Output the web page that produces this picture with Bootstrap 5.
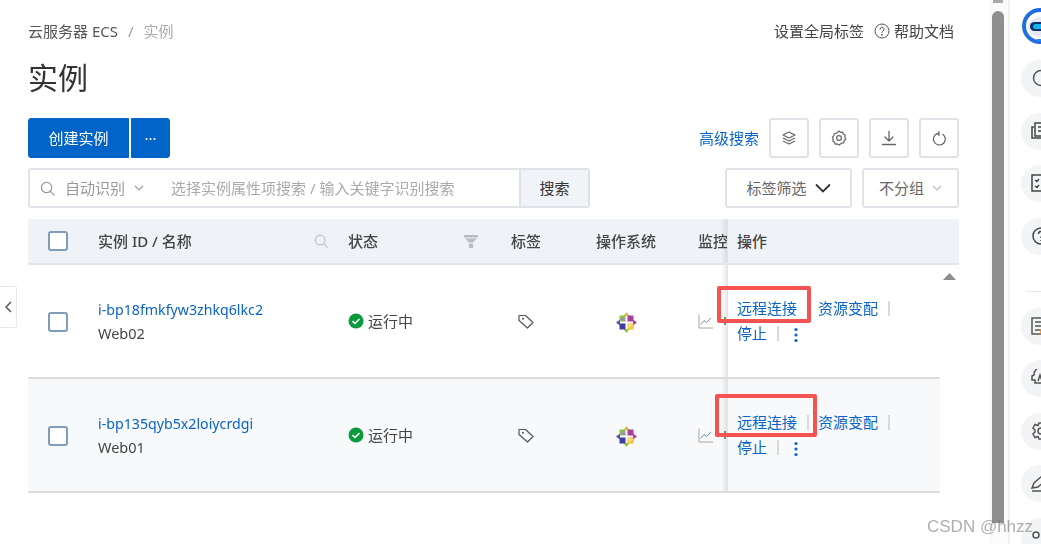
<!DOCTYPE html>
<html lang="zh-CN">
<head>
<meta charset="utf-8">
<title>实例</title>
<link href="https://cdn.jsdelivr.net/npm/bootstrap@5.3.0/dist/css/bootstrap.min.css" rel="stylesheet">
<style>
html,body{height:544px;overflow:hidden;background:#fff}
body{font-family:"Noto Sans","Noto Sans CJK SC",sans-serif;font-size:15px;color:#333}
.pg{height:544px;position:relative;filter:blur(.4px)}
.mainpane{width:989px;padding:20px 30px 0 28px;flex:none}
.crumb{margin:0;--bs-breadcrumb-margin-bottom:0;--bs-breadcrumb-divider-color:#999;--bs-breadcrumb-item-padding-x:10px;line-height:22px}
.crumb .breadcrumb-item{color:#555}
.crumb .breadcrumb-item.active{color:#aaa}
.toplink{color:#444;line-height:22px;margin-right:5px}
.helpic{margin:0 4px 0 10px}
.pagetitle{font-size:30px;line-height:40px;margin:16px 0 20px;font-weight:400;color:#333}
.btn-make{--bs-btn-bg:#0064c8;--bs-btn-border-color:#0064c8;--bs-btn-color:#fff;--bs-btn-border-radius:3px;height:40px;font-size:15px;padding:0}
.btn-make-a{width:101px;border-radius:3px 0 0 3px}
.btn-make-b{width:39px;margin-left:2px;border-radius:0 3px 3px 0;line-height:30px}
.advlink{color:#0a64c8;text-decoration:none;margin-right:10px}
.ibtn{width:40px;height:40px;border:2px solid #dfe3e8;border-radius:3px;background:#fff;padding:0;color:#666}
.ibtns{gap:10px}
.srow{margin-top:10px;height:40px}
.sgroup{width:562px;height:40px;flex-wrap:nowrap}
.sbox{width:491px;flex:none;border:2px solid #dfe3e8;border-right:0;border-radius:3px 0 0 3px;height:40px;padding-left:10px;color:#999}
.autotxt{margin:0 9px 0 10px}
.sinput{border:0;padding:0;margin-left:27px;width:300px;font-size:15px;box-shadow:none;background:transparent}
.sinput::placeholder{color:#aaa;opacity:1}
.sgroup .sbtn{width:71px;flex:none;height:40px;background:#f0f3f7;border:2px solid #dfe3e8;border-radius:0 3px 3px 0;color:#333;font-size:15px;padding:0;margin-left:0!important}
.fbtn{height:40px;border:2px solid #dfe3e8;border-radius:3px;background:#fff;color:#666;font-size:15px;padding:0}
.fbtn-a{width:127px}
.fbtn-b{width:97px}
.fgap{gap:10px}
.inst{margin:11px 0 0;width:931px;table-layout:fixed;--bs-table-bg:transparent;--bs-table-border-color:transparent;border-collapse:collapse}
.inst>*>tr>*{padding:0;vertical-align:middle;overflow:hidden;white-space:nowrap;color:#444;font-size:15px;border:0}
.inst thead tr{height:45px}
.inst thead th{background:#eff3f8;font-weight:500;border-bottom:2px solid #e2e5e9;color:#444}
.inst tbody tr{height:114px}
.inst tbody td{border-bottom:2px solid #dcdcdc;box-sizing:border-box}
.inst tbody tr.alt td{background:#f7f9fb;border-bottom-color:#dcdcdc}
.inst tbody td.gut,.inst tbody tr.alt td.gut{background:#fff;border-bottom:0;vertical-align:top;padding-top:8px;padding-left:3px;overflow:visible}
.inst>*>tr>.chk{padding-left:20px}
.inst>tbody>tr>.chk{padding-top:2px}
.chk .form-check-input{width:20px;height:20px;margin:0;display:block;border:2px solid #7f9cbb;border-radius:3px}
.inst>*>tr>.tagcol{padding-left:7px}
.inst>*>tr>.oscol{padding-left:20px;padding-top:3px}
.inst>*>tr>.opcol{position:relative;padding-left:10px;overflow:visible}
.opcol::before{content:"";position:absolute;left:-6px;top:0;bottom:0;width:6px;background:linear-gradient(to right,rgba(0,0,0,0),rgba(0,0,0,.09))}
.opcol::after{content:"";position:absolute;left:0;top:0;bottom:0;width:1px;background:#e4e4e4}
.inst a{color:#0a64c8;text-decoration:none}
.idlink{line-height:24px;margin-top:1px;display:block;font-size:14.2px}
.subname{line-height:23px;display:block;font-size:14.5px}
.sep{display:inline-block;width:2px;height:15px;background:#d9d9d9;vertical-align:-2px;margin:0 9px 0 10px}
.sep-none{background:transparent}
.opline{line-height:25px}
.kebab{margin-left:6px}
.okdot{color:#444}
.redbox{position:absolute;border:4px solid #f55252;border-radius:2px;pointer-events:none;z-index:2}
.rb1{left:-10px;top:21px;width:94px;height:37px}
.rb2{left:-12px;top:15px;width:102px;height:43px}
.chartic{display:block}
.mon{display:flex;align-items:center;height:16px}
.monsliver{display:block;width:2px;height:8px;background:#5bae6c;margin-left:11px;flex:none}
.thumbcol{width:19px;flex:none;background:#fbfbfb;padding-left:3px}
.thumb{width:12px;height:512px;margin-top:11px;background:#8f8f8f;border-radius:6px 6px 0 0}
.sidecol{width:33px;flex:none;border-left:2px solid #f1f1f1;padding:8px 0 0 11px;overflow:hidden;background:#fff}
.logo{width:36px;height:36px;display:block;flex:none}
.roundb{width:37px;height:37px;border-radius:50%;background:#f3f4f6;margin-top:15.500px;padding:9px 0 0 10px;flex:none}
.roundb svg{display:block}
.firstb{margin-top:16px}
.nogap{margin-top:0}
.sideline{height:1px;background:#e8e8e8;margin:36px 0 16px 5px;width:40px;flex:none}
.tabbtn{position:absolute;left:0;top:286px;width:17px;height:42px;border:1px solid #e8e8e8;border-left:0;border-radius:0 2px 2px 0;background:#fff;display:flex;align-items:center;justify-content:center}
.wmark{position:absolute;left:927px;top:515px;font-family:"Liberation Sans",sans-serif;font-size:17px;color:rgba(120,120,120,.6);white-space:nowrap;line-height:24px}
.topcaret{position:absolute;left:993px;top:0;width:10px;height:3px;background:#aaa}
</style>
</head>
<body>
<svg width="0" height="0" class="position-absolute">
  <defs>
    <symbol id="centos" viewBox="0 0 21 21">
      <path d="M10.500 0l3 4h-6z" fill="#d8b84a"/>
      <path d="M21 10.500l-4 3v-6z" fill="#a83f9c"/>
      <path d="M10.500 21l-3-4h6z" fill="#8cc63f"/>
      <path d="M0 10.500l4-3v6z" fill="#5a4fa8"/>
      <rect x="3.500" y="3.500" width="6" height="6" fill="#8cc63f"/>
      <rect x="11.500" y="3.500" width="6" height="6" fill="#a83f9c"/>
      <rect x="11.500" y="11.500" width="6" height="6" fill="#f4c02f"/>
      <rect x="3.500" y="11.500" width="6" height="6" fill="#3d3f9e"/>
      <path d="M8 4l1.500 5.500L4 8z" fill="#a98bc0"/>
      <path d="M17 13l-5.500-1.500L13 17z" fill="#f8d98a"/>
    </symbol>
    <symbol id="tagic" viewBox="0 0 16 16">
      <path d="M1 2.500h6.500L15 9.500 9.500 15 1 7.500z" fill="none" stroke="#555" stroke-width="1.200" stroke-linejoin="round"/><circle cx="5" cy="5.800" r="1" fill="#555"/>
    </symbol>
    <symbol id="okic" viewBox="0 0 16 16">
      <circle cx="8" cy="8" r="7.500" fill="#0a9a3c"/><path d="M4.500 8.200l2.500 2.300 4.500-4.500" fill="none" stroke="#fff" stroke-width="1.600"/>
    </symbol>
    <symbol id="chartic" viewBox="0 0 15 15">
      <path d="M1 .5v13.500h14" fill="none" stroke="#a8a49a" stroke-width="1"/><path d="M2.500 10.500l3.500-4 2.500 2 4.500-4.500" fill="none" stroke="#6d8fb0" stroke-width="1"/>
    </symbol>
    <symbol id="kebabic" viewBox="0 0 4 16">
      <circle cx="2" cy="2.500" r="1.600" fill="#0a64c8"/><circle cx="2" cy="8" r="1.600" fill="#0a64c8"/><circle cx="2" cy="13.500" r="1.600" fill="#0a64c8"/>
    </symbol>
  </defs>
</svg>
<div class="pg d-flex">
  <div class="mainpane">
    <div class="d-flex justify-content-between align-items-center">
      <nav aria-label="breadcrumb">
        <ol class="breadcrumb crumb">
          <li class="breadcrumb-item">云服务器 ECS</li>
          <li class="breadcrumb-item active">实例</li>
        </ol>
      </nav>
      <div class="d-flex align-items-center toplink">
        <span>设置全局标签</span>
        <svg class="helpic" width="16" height="16" viewBox="0 0 16 16" fill="none" stroke="#555" stroke-width="1"><circle cx="8" cy="8" r="7"/><path d="M6 6.300a2 2 0 1 1 3 1.700c-.7.400-1 .8-1 1.600" stroke-linecap="round"/><circle cx="8" cy="11.800" r=".5" fill="#555"/></svg>
        <span>帮助文档</span>
      </div>
    </div>
    <h1 class="pagetitle">实例</h1>
    <div class="d-flex justify-content-between align-items-center">
      <div class="d-flex">
        <button class="btn btn-primary btn-make btn-make-a" type="button">创建实例</button>
        <button class="btn btn-primary btn-make btn-make-b" type="button">···</button>
      </div>
      <div class="d-flex align-items-center">
        <a class="advlink" href="#">高级搜索</a>
        <div class="d-flex ibtns">
          <button class="ibtn d-flex align-items-center justify-content-center" type="button" aria-label="层"><svg width="16" height="16" viewBox="0 0 16 16" fill="none" stroke="#666" stroke-width="1.200" stroke-linejoin="round"><path d="M8 2l6 3-6 3-6-3z"/><path d="M2 8l6 3 6-3M2 11l6 3 6-3"/></svg></button>
          <button class="ibtn d-flex align-items-center justify-content-center" type="button" aria-label="设置"><svg width="16" height="16" viewBox="0 0 16 16" fill="none" stroke="#666" stroke-width="1.200" stroke-linejoin="round"><path d="M8 1l1.600 1.400 2.100-.2.700 2 1.900 1-.5 2.100.9 2-1.600 1.400-.3 2.100-2.100.3L8.200 15 6.300 13.900l-2.100.3-.7-2-1.800-1.100.5-2.100-.9-1.900L3 5.600l.2-2.100 2.200-.3z"/><circle cx="8" cy="8" r="2.400"/></svg></button>
          <button class="ibtn d-flex align-items-center justify-content-center" type="button" aria-label="下载"><svg width="16" height="16" viewBox="0 0 16 16" fill="none" stroke="#666" stroke-width="1.300" stroke-linecap="round" stroke-linejoin="round"><path d="M8 1.500v9M4 7l4 4 4-4M1.500 14.500h13"/></svg></button>
          <button class="ibtn d-flex align-items-center justify-content-center" type="button" aria-label="刷新"><svg width="15" height="15" viewBox="0 0 16 16" fill="none" stroke="#666" stroke-width="1.300" stroke-linecap="round" stroke-linejoin="round"><path d="M11.500 3.500A6.300 6.300 0 1 1 6 2.600"/><path d="M7.500 .5v4l-2-2"/></svg></button>
        </div>
      </div>
    </div>
    <div class="srow d-flex justify-content-between">
      <div class="input-group sgroup">
        <div class="sbox d-flex align-items-center">
          <svg width="15" height="15" viewBox="0 0 16 16" fill="none" stroke="#999" stroke-width="1.300" stroke-linecap="round"><circle cx="7" cy="7" r="5.500"/><path d="M11 11l4 4"/></svg>
          <span class="autotxt">自动识别</span>
          <svg width="10" height="6" viewBox="0 0 10 6" fill="none" stroke="#999" stroke-width="1.200"><path d="M1 1l4 4 4-4"/></svg>
          <input class="form-control sinput" type="text" placeholder="选择实例属性项搜索 / 输入关键字识别搜索" aria-label="搜索">
        </div>
        <button class="btn sbtn" type="button">搜索</button>
      </div>
      <div class="d-flex fgap">
        <button class="fbtn fbtn-a d-flex align-items-center justify-content-center" type="button">标签筛选<svg class="ms-2" width="16" height="10" viewBox="0 0 16 10" fill="none" stroke="#333" stroke-width="1.800"><path d="M1 1.500l7 7 7-7"/></svg></button>
        <button class="fbtn fbtn-b d-flex align-items-center justify-content-center" type="button">不分组<svg class="ms-2" width="10" height="6" viewBox="0 0 10 6" fill="none" stroke="#bbb" stroke-width="1.200"><path d="M1 1l4 4 4-4"/></svg></button>
      </div>
    </div>
    <table class="table inst">
      <colgroup>
        <col style="width:70px"><col style="width:250px"><col style="width:163px"><col style="width:85px"><col style="width:102px"><col style="width:29px"><col style="width:213px"><col style="width:19px">
      </colgroup>
      <thead>
        <tr>
          <th class="chk"><input class="form-check-input" type="checkbox" aria-label="全选"></th>
          <th><div class="d-flex justify-content-between align-items-center">实例 ID / 名称<svg style="margin-right:20px" width="14" height="14" viewBox="0 0 16 16" fill="none" stroke="#c4c7cb" stroke-width="1.600" stroke-linecap="round"><circle cx="7" cy="7" r="5.500"/><path d="M11 11l4 4"/></svg></div></th>
          <th><div class="d-flex justify-content-between align-items-center">状态<svg style="margin-right:33px" width="14" height="13" viewBox="0 0 14 13" fill="#b9bcc1"><path d="M0 0h14v2.500H0zM1 3.500h12L9 7.500H5zM5 8.500h4V13H5z"/></svg></div></th>
          <th>标签</th>
          <th>操作系统</th>
          <th>监控</th>
          <th class="opcol">操作</th>
          <th></th>
        </tr>
      </thead>
      <tbody>
        <tr>
          <td class="chk"><input class="form-check-input" type="checkbox" aria-label="选择 Web02"></td>
          <td><a class="idlink" href="#">i-bp18fmkfyw3zhkq6lkc2</a><span class="subname">Web02</span></td>
          <td><span class="d-flex align-items-center okdot"><svg class="me-1" width="16" height="16"><use href="#okic"/></svg>运行中</span></td>
          <td class="tagcol"><svg class="d-block" width="16" height="16"><use href="#tagic"/></svg></td>
          <td class="oscol"><svg class="d-block" width="21" height="21"><use href="#centos"/></svg></td>
          <td><div class="mon"><svg class="chartic" width="15" height="15"><use href="#chartic"/></svg><span class="monsliver"></span></div></td>
          <td class="opcol">
            <div class="redbox rb1"></div>
            <div class="opline"><a href="#">远程连接</a><span class="sep sep-none"></span><a href="#">资源变配</a><span class="sep"></span></div>
            <div class="opline"><a href="#">停止</a><span class="sep"></span><a href="#" class="kebab" aria-label="更多"><svg width="4" height="16"><use href="#kebabic"/></svg></a></div>
          </td>
          <td class="gut"><svg width="13" height="7" viewBox="0 0 13 7" class="d-block"><path d="M6.500 0L13 7H0z" fill="#8d8d8d"/></svg></td>
        </tr>
        <tr class="alt">
          <td class="chk"><input class="form-check-input" type="checkbox" aria-label="选择 Web01"></td>
          <td><a class="idlink" href="#">i-bp135qyb5x2loiycrdgi</a><span class="subname">Web01</span></td>
          <td><span class="d-flex align-items-center okdot"><svg class="me-1" width="16" height="16"><use href="#okic"/></svg>运行中</span></td>
          <td class="tagcol"><svg class="d-block" width="16" height="16"><use href="#tagic"/></svg></td>
          <td class="oscol"><svg class="d-block" width="21" height="21"><use href="#centos"/></svg></td>
          <td><div class="mon"><svg class="chartic" width="15" height="15"><use href="#chartic"/></svg><span class="monsliver"></span></div></td>
          <td class="opcol">
            <div class="redbox rb2"></div>
            <div class="opline"><a href="#">远程连接</a><span class="sep"></span><a href="#">资源变配</a><span class="sep"></span></div>
            <div class="opline"><a href="#">停止</a><span class="sep"></span><a href="#" class="kebab" aria-label="更多"><svg width="4" height="16"><use href="#kebabic"/></svg></a></div>
          </td>
          <td class="gut"></td>
        </tr>
      </tbody>
    </table>
  </div>
  <div class="thumbcol"><div class="thumb"></div></div>
  <div class="sidecol d-flex flex-column">
    <svg class="logo" viewBox="0 0 36 36"><circle cx="19" cy="18" r="16" fill="none" stroke="#1f6fe0" stroke-width="4"/><ellipse cx="20" cy="19" rx="13" ry="10" fill="#e3e8f4"/><rect x="9" y="14" width="24" height="9" rx="4.500" fill="#0d2f6d"/><rect x="12" y="16" width="16" height="5" rx="2.500" fill="#18b4f0"/><path d="M16 32h14" stroke="#1f8df0" stroke-width="2"/></svg>
    <div class="roundb firstb"><svg width="24" height="18" viewBox="0 0 24 18" fill="none" stroke="#555" stroke-width="1.500"><circle cx="10" cy="9" r="7.500"/></svg></div>
    <div class="roundb"><svg width="24" height="18" viewBox="0 0 24 18" fill="none" stroke="#444" stroke-width="1.500"><path d="M3 5H1v11h16"/><rect x="4" y="1" width="14" height="13"/><path d="M7 5h8M7 9h8"/></svg></div>
    <div class="roundb"><svg width="24" height="18" viewBox="0 0 24 18" fill="none" stroke="#444" stroke-width="1.500"><rect x="1" y="1" width="18" height="16"/><path d="M4 6l2 1.500L8 5M4 12l2 1.500L8 11M10 7h6M10 12h6"/></svg></div>
    <div class="roundb"><svg width="24" height="18" viewBox="0 0 24 18" fill="none" stroke="#444" stroke-width="1.500"><circle cx="10" cy="9" r="8"/><path d="M7.500 7a2.500 2.500 0 1 1 3.500 2.200c-.8.400-1 .8-1 1.800M10 13v1"/></svg></div>
    <div class="sideline"></div>
    <div class="roundb nogap"><svg width="24" height="18" viewBox="0 0 24 18" fill="none" stroke="#555" stroke-width="1.500"><rect x="1" y="1" width="18" height="16"/><path d="M4 5h12M4 9h8M4 13h6"/><path d="M10 12v5" stroke="#e98a2c"/></svg></div>
    <div class="roundb"><svg width="24" height="18" viewBox="0 0 24 18" fill="none" stroke="#555" stroke-width="1.500"><path d="M3 6a7 7 0 0 1 14-1v9H4v-3H1V7z"/><path d="M7 12l2-6 2 6"/></svg></div>
    <div class="roundb"><svg width="24" height="18" viewBox="0 0 24 18" fill="none" stroke="#555" stroke-width="1.500"><path d="M8 1h4l1 2.500 3-1 2 3.500-2 2v2l2 2-2 3.500-3-1-1 2.500H8l-1-2.500-3 1-2-3.500 2-2V8L2 6l2-3.500 3 1z"/><circle cx="10" cy="9" r="3"/></svg></div>
    <div class="roundb"><svg width="24" height="18" viewBox="0 0 24 18" fill="none" stroke="#555" stroke-width="1.500"><path d="M1 14l2-5 8-7 4 4-8 7zM1 17h18"/></svg></div>
    <div class="roundb"><svg width="24" height="18" viewBox="0 0 24 18" fill="none" stroke="#555" stroke-width="1.500"><circle cx="5" cy="8" r="3"/><circle cx="14" cy="12" r="3"/></svg></div>
  </div>
  <div class="topcaret"></div>
  <div class="tabbtn" aria-label="收起"><svg width="7" height="12" viewBox="0 0 7 12" fill="none" stroke="#555" stroke-width="1.500"><path d="M6 1L1 6l5 5"/></svg></div>
  <div class="wmark">CSDN @hhzz</div>
</div>
<script src="https://cdn.jsdelivr.net/npm/bootstrap@5.3.0/dist/js/bootstrap.bundle.min.js"></script>
</body>
</html>
